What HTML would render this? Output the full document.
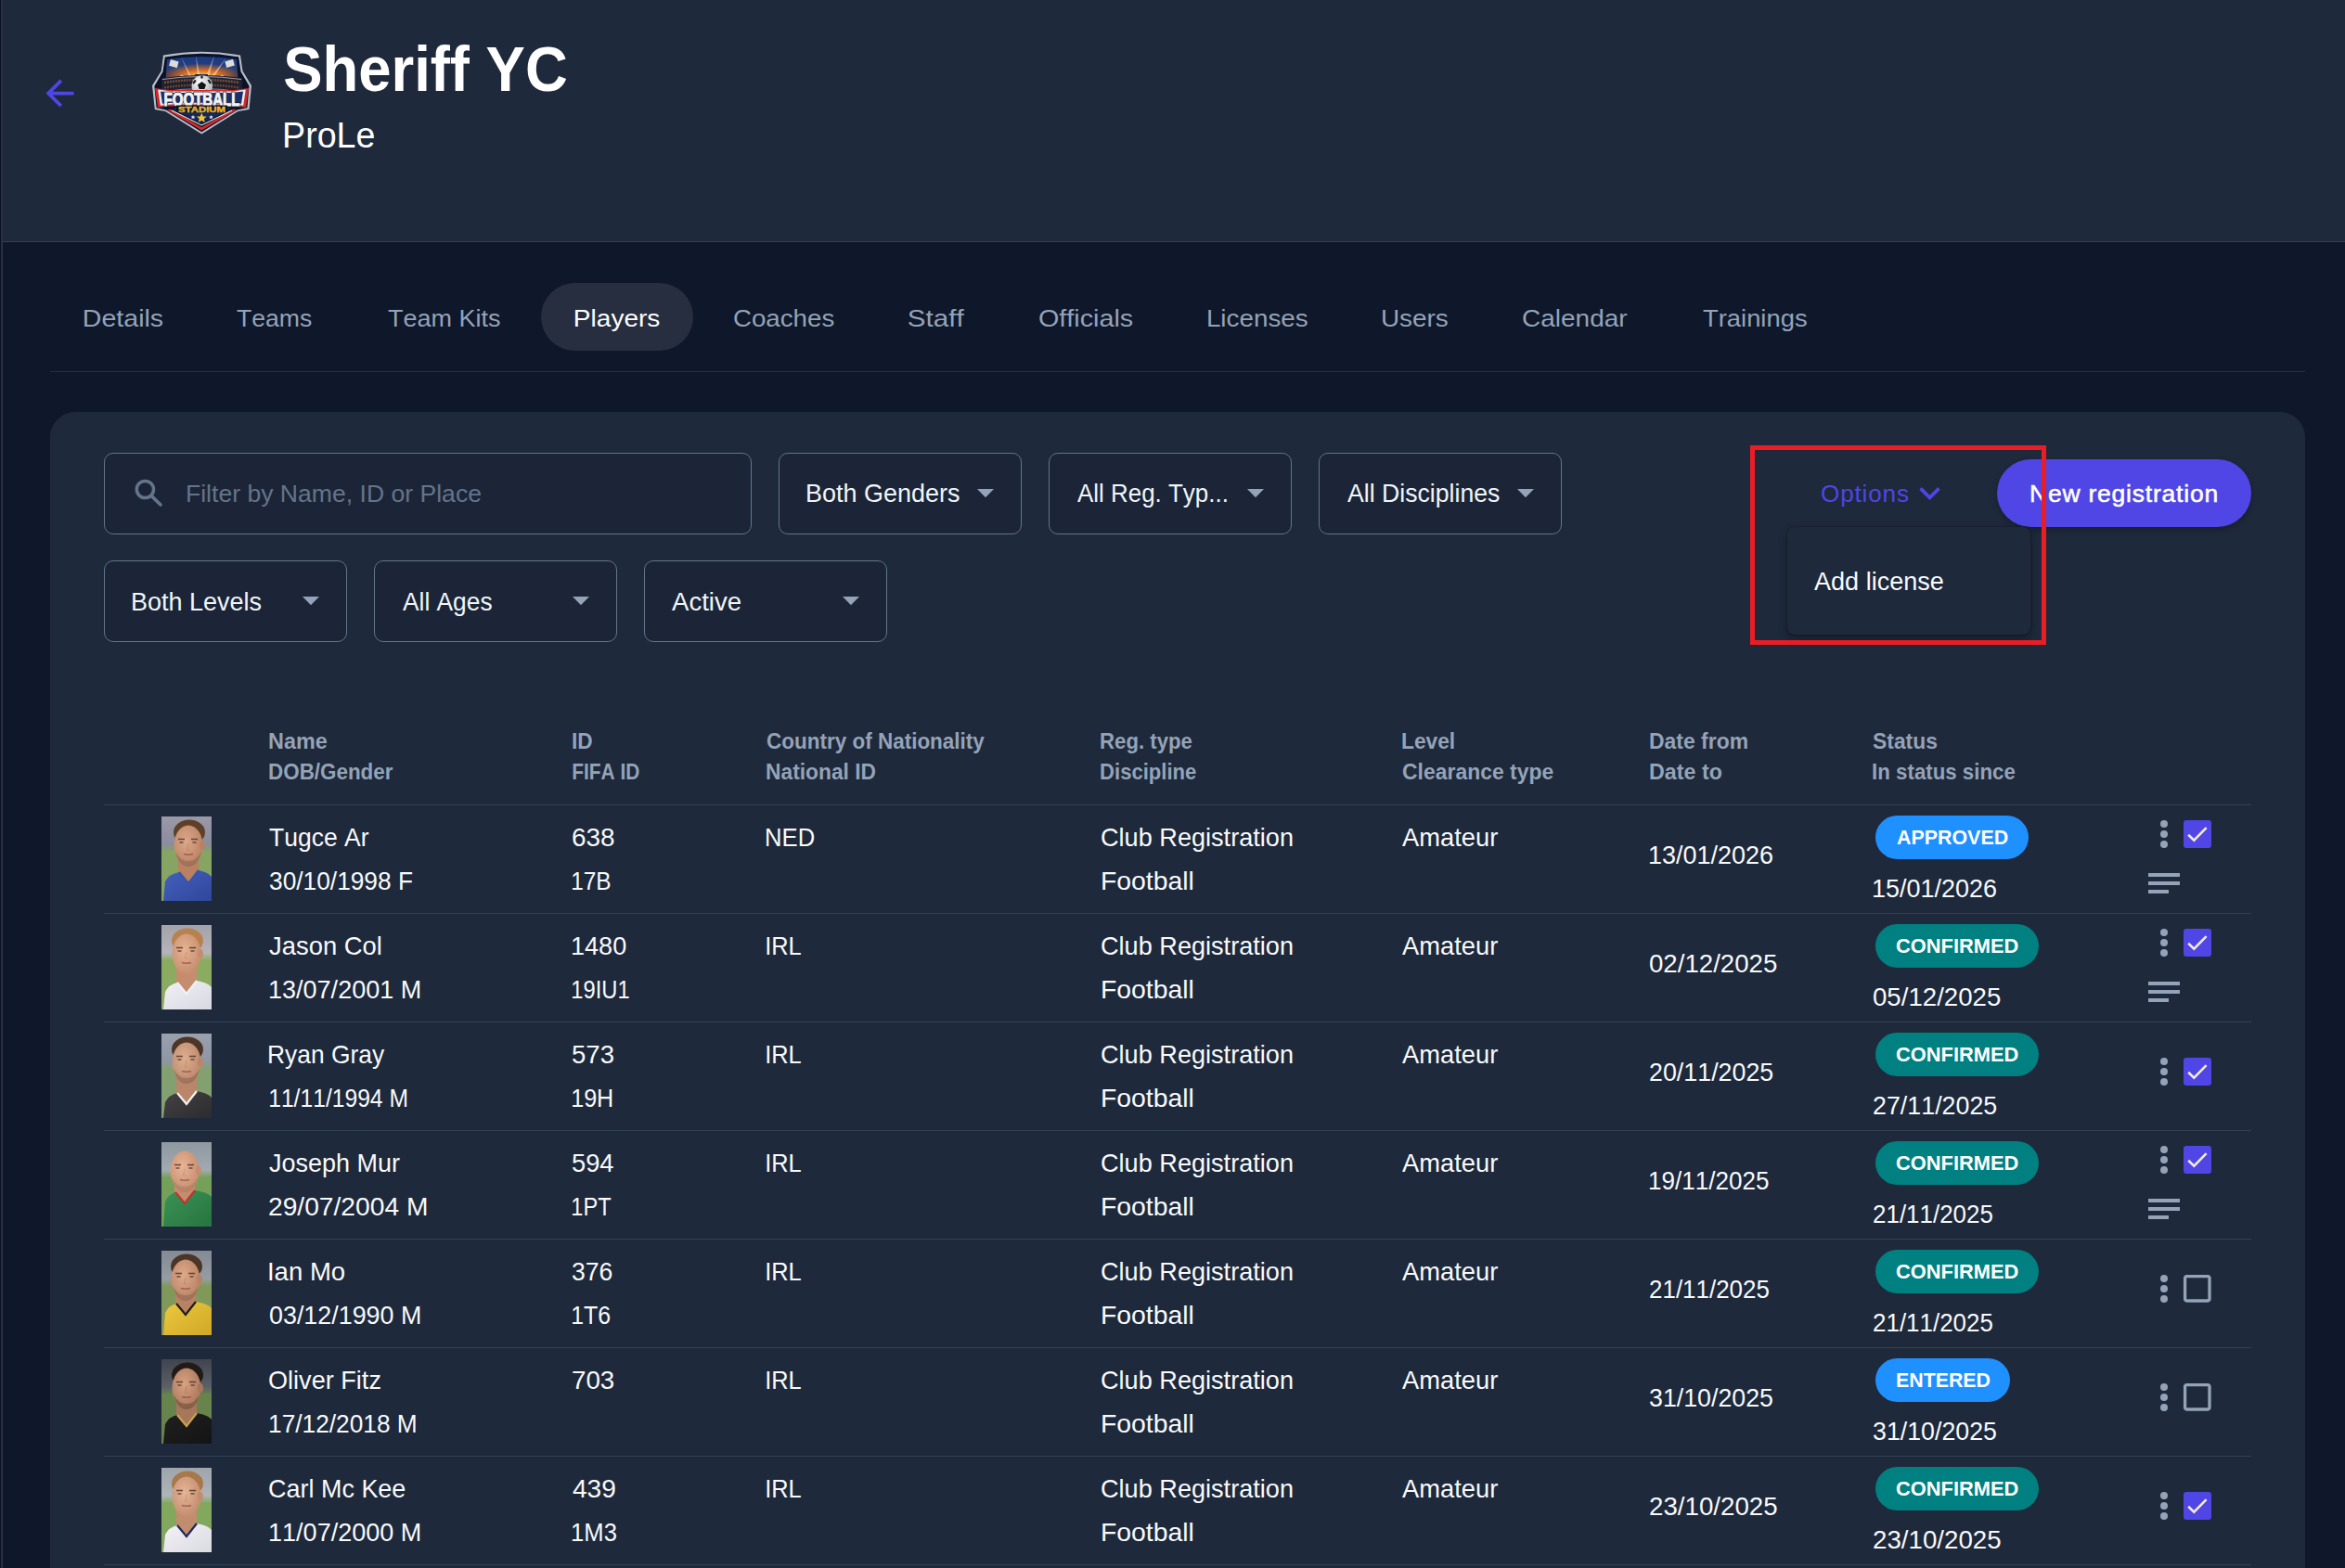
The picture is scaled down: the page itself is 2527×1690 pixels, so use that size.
<!DOCTYPE html>
<html><head><meta charset="utf-8"><title>Sheriff YC - Players</title>
<style>
html,body{margin:0;padding:0;}
body{width:2527px;height:1690px;overflow:hidden;background:#0f172a;position:relative;font-family:"Liberation Sans",sans-serif;}
.t{position:absolute;line-height:1;white-space:nowrap;font-kerning:none;}
</style></head><body>
<div style="position:absolute;left:0.00px;top:0.00px;width:1.00px;height:1690.00px;background:#0a1326"></div>
<div style="position:absolute;left:1.00px;top:0.00px;width:2.00px;height:1690.00px;background:#2a2f40"></div>
<div style="position:absolute;left:3.00px;top:0.00px;width:2524.00px;height:260.00px;background:#1e293b"></div>
<div style="position:absolute;left:3.00px;top:260.00px;width:2524.00px;height:1.00px;background:#334155"></div>
<svg style="position:absolute;left:42.1px;top:77.9px" width="45" height="45" viewBox="0 0 24 24"><path d="M20 11H7.83l5.59-5.59L12 4l-8 8 8 8 1.41-1.41L7.83 13H20v-2z" fill="#4f46e5"/></svg>
<svg style="position:absolute;left:164px;top:54px" width="107" height="91" viewBox="0 0 107 91">
<defs>
<linearGradient id="sky" x1="0" y1="0" x2="0" y2="1"><stop offset="0" stop-color="#183a86"/><stop offset="0.55" stop-color="#2a3f78"/><stop offset="1" stop-color="#3a2a30"/></linearGradient>
<radialGradient id="glow" cx="0.5" cy="0.85" r="0.55"><stop offset="0" stop-color="#ffd36a"/><stop offset="0.45" stop-color="#e0701e"/><stop offset="1" stop-color="#e0701e" stop-opacity="0"/></radialGradient>
<linearGradient id="gold" x1="0" y1="0" x2="0" y2="1"><stop offset="0" stop-color="#ffe680"/><stop offset="1" stop-color="#d89412"/></linearGradient>
<radialGradient id="ball" cx="0.4" cy="0.35" r="0.7"><stop offset="0" stop-color="#fff"/><stop offset="1" stop-color="#a8adb5"/></radialGradient>
</defs>
<path d="M12 5.6 Q53 -2 95 5.6 L97.5 22.5 L107 38.3 L104.5 63.9 L92.6 66 L53.3 90.5 L14 66 L2.8 63.9 L0 38.3 L9.8 22.5 Z" fill="#b9bfca"/>
<path d="M13.8 7.4 Q53 0.3 93.2 7.4 L95.5 23.3 L104.6 38.8 L102.4 62.2 L91.8 64.4 L53.3 88.3 L15 64.4 L4.6 62.2 L2.4 38.8 L11.5 23.3 Z" fill="#0b1228"/>
<path d="M16 10 Q53 3.8 91 10 L92.5 32 L14.5 32 Z" fill="url(#sky)"/>
<path d="M16 10 Q53 3.8 91 10 L92.5 32 L14.5 32 Z" fill="url(#glow)"/>
<path d="M31 7 L42 28 L40 28.5 Z M47 5.5 L51.5 28 L49 28 Z M67 6 L58 28 L61 28.5 Z M80 8 L64 28 L67 28.5 Z" fill="#fff6d8" opacity="0.5"/>
<rect x="19" y="11" width="9" height="7" fill="#dcdcdc" transform="rotate(15 23 14)"/>
<rect x="79" y="11" width="9" height="7" fill="#dcdcdc" transform="rotate(-15 83 14)"/>
<circle cx="32" cy="29" r="2.2" fill="#fff3c0"/><circle cx="41" cy="30" r="2" fill="#fff3c0"/><circle cx="65" cy="30" r="2" fill="#fff3c0"/><circle cx="75" cy="29" r="2.2" fill="#fff3c0"/>
<rect x="46" y="26" width="14" height="5" fill="#2a3048"/>
<path d="M10 30 Q53 24 97 30 L97 47 Q53 40 10 47 Z" fill="#1f2130"/>
<path d="M13 35 Q53 29 94 35" stroke="#7a4e34" stroke-width="2.4" fill="none" stroke-dasharray="2 1"/>
<path d="M13 40.5 Q53 34.5 94 40.5" stroke="#6e4630" stroke-width="2.2" fill="none" stroke-dasharray="2 1"/>
<path d="M11 31.5 Q53 25.5 96 31.5" stroke="#9aa2b2" stroke-width="1" fill="none"/>
<path d="M11 45 Q53 38 96 45" stroke="#9aa2b2" stroke-width="0.8" fill="none"/>
<ellipse cx="53.5" cy="48" rx="27" ry="5.5" fill="#3f8f34"/>
<ellipse cx="53.5" cy="50" rx="18" ry="3.2" fill="none" stroke="#e03030" stroke-width="1.3"/>
<path d="M56 53 Q70 52 72 48" stroke="#39a0ff" stroke-width="1.6" fill="none"/>
<circle cx="53.8" cy="38.5" r="11.3" fill="url(#ball)"/>
<path d="M53.5 34 L58 37.2 L56.4 42 L50.6 42 L49 37.2 Z" fill="#141414"/>
<path d="M44 36 L46.8 32.5 M63 36 L60.4 32 M46 46 L49.5 43.5 M61.5 46 L57.8 43.5 M53.5 27.5 L53.5 30.5" stroke="#1a1a1a" stroke-width="2.2"/>
<path d="M3 41 L19 43 L88 43 L104 41 L101 62 L88 60.5 L19 60.5 L6 62 Z" fill="#d42828"/>
<path d="M6.2 42.6 L20 44.4 L87 44.4 L100.8 42.6 L98.2 59.8 L87 58.6 L20 58.6 L8.8 59.8 Z" fill="#ececf0"/>
<path d="M9 44.4 L21 45.9 L86 45.9 L98 44.4 L96 57.8 L86 56.8 L21 56.8 L11 57.8 Z" fill="#18306e"/>
<text x="53.5" y="60.2" text-anchor="middle" font-family="Liberation Sans" font-weight="700" font-size="21" fill="#1a1a24" stroke="#1a1a24" stroke-width="2.6" textLength="82" lengthAdjust="spacingAndGlyphs">FOOTBALL</text>
<text x="53.5" y="60.2" text-anchor="middle" font-family="Liberation Sans" font-weight="700" font-size="21" fill="#f2f2f5" stroke="#f2f2f5" stroke-width="1.1" textLength="82" lengthAdjust="spacingAndGlyphs">FOOTBALL</text>
<path d="M16 64.5 L53.3 86.5 L91 64.5 L87.5 63.5 L53.3 83.3 L19.5 63.5 Z" fill="#d42828"/>
<path d="M21 65 L53.3 81 L86 65" stroke="#e8edf2" stroke-width="1.1" fill="none"/>
<path d="M23.5 64.5 L53.3 79 L83.5 64.5 L83.5 62 L23.5 62 Z" fill="#14285a"/>
<rect x="26" y="59.5" width="55" height="7.5" fill="#0b1228"/>
<text x="53.5" y="66.8" text-anchor="middle" font-family="Liberation Sans" font-weight="700" font-size="9.6" fill="url(#gold)" stroke="#e8b020" stroke-width="0.5" textLength="51" lengthAdjust="spacingAndGlyphs">STADIUM</text>
<path d="M53.3 67.8 L54.9 71.4 L58.8 71.6 L55.8 74 L56.8 77.8 L53.3 75.7 L49.8 77.8 L50.8 74 L47.8 71.6 L51.7 71.4 Z" fill="#f5c430"/>
<path d="M44 70 L44.8 71.5 L46.4 71.6 L45.2 72.6 L45.6 74.2 L44 73.3 L42.4 74.2 L42.8 72.6 L41.6 71.6 L43.2 71.5 Z" fill="#e8e8e8"/>
<path d="M63.5 70 L64.3 71.5 L65.9 71.6 L64.7 72.6 L65.1 74.2 L63.5 73.3 L61.9 74.2 L62.3 72.6 L61.1 71.6 L62.7 71.5 Z" fill="#e8e8e8"/>
</svg>

<div class="t" style="left:305.41px;top:39.88px;font-size:69.04px;color:#fff;font-weight:700;transform:scaleX(0.9186);transform-origin:1.99px 0;">Sheriff YC</div>
<div class="t" style="left:304.25px;top:126.81px;font-size:38.37px;color:#fff;transform:scaleX(0.9801);transform-origin:3.15px 0;">ProLe</div>
<div style="position:absolute;left:583.00px;top:305.00px;width:164.00px;height:73.00px;background:rgba(255,255,255,0.1);border-radius:37px"></div>
<div class="t" style="left:88.83px;top:329.57px;font-size:26.45px;color:#94a3b8;transform:scaleX(1.0806);transform-origin:2.17px 0;">Details</div>
<div class="t" style="left:255.41px;top:329.57px;font-size:26.45px;color:#94a3b8;transform:scaleX(1.0064);transform-origin:0.59px 0;">Teams</div>
<div class="t" style="left:417.61px;top:329.57px;font-size:26.45px;color:#94a3b8;transform:scaleX(1.0211);transform-origin:0.59px 0;">Team Kits</div>
<div class="t" style="left:617.53px;top:329.57px;font-size:26.45px;color:#fff;transform:scaleX(1.0601);transform-origin:2.17px 0;">Players</div>
<div class="t" style="left:789.66px;top:329.57px;font-size:26.45px;color:#94a3b8;transform:scaleX(1.0479);transform-origin:1.34px 0;">Coaches</div>
<div class="t" style="left:978.20px;top:329.57px;font-size:26.45px;color:#94a3b8;transform:scaleX(1.1194);transform-origin:1.20px 0;">Staff</div>
<div class="t" style="left:1119.05px;top:329.57px;font-size:26.45px;color:#94a3b8;transform:scaleX(1.0886);transform-origin:1.25px 0;">Officials</div>
<div class="t" style="left:1299.63px;top:329.57px;font-size:26.45px;color:#94a3b8;transform:scaleX(1.0525);transform-origin:2.17px 0;">Licenses</div>
<div class="t" style="left:1487.86px;top:329.57px;font-size:26.45px;color:#94a3b8;transform:scaleX(1.0563);transform-origin:2.04px 0;">Users</div>
<div class="t" style="left:1639.86px;top:329.57px;font-size:26.45px;color:#94a3b8;transform:scaleX(1.0600);transform-origin:1.34px 0;">Calendar</div>
<div class="t" style="left:1834.61px;top:329.57px;font-size:26.45px;color:#94a3b8;transform:scaleX(1.0359);transform-origin:0.59px 0;">Trainings</div>
<div style="position:absolute;left:54.00px;top:400.00px;width:2430.00px;height:1.00px;background:#253041"></div>
<div style="position:absolute;left:54.00px;top:444.00px;width:2430.00px;height:1400.00px;background:#1e293b;border-radius:27px"></div>

<div style="position:absolute;left:112.00px;top:488.00px;width:698.00px;height:87.50px;box-sizing:border-box;border:1.4px solid #64748b;border-radius:10px;background:#1b2537"></div>
<svg style="position:absolute;left:140px;top:512px" width="40" height="40" viewBox="0 0 40 40">
<circle cx="16.4" cy="15.5" r="9.1" fill="none" stroke="#64748b" stroke-width="3.5"/>
<path d="M23.3 22.6 L33 32" stroke="#64748b" stroke-width="3.6" stroke-linecap="round"/></svg>
<div class="t" style="left:199.85px;top:519.32px;font-size:26.16px;color:#64748b;transform:scaleX(1.0160);transform-origin:2.15px 0;">Filter by Name, ID or Place</div>
<div style="position:absolute;left:839.00px;top:488.00px;width:262.00px;height:87.50px;box-sizing:border-box;border:1.4px solid #64748b;border-radius:10px;background:#1b2537"></div>
<div class="t" style="left:868.01px;top:519.13px;font-size:26.74px;color:#f1f5f9;transform:scaleX(1.0089);transform-origin:2.19px 0;">Both Genders</div>
<svg style="position:absolute;left:1053.00px;top:526.50px" width="18" height="9.5" viewBox="0 0 18 9.5"><path d="M0 0 H18 L9 9.2 Z" fill="#94a3b8"/></svg>
<div style="position:absolute;left:1130.00px;top:488.00px;width:262.00px;height:87.50px;box-sizing:border-box;border:1.4px solid #64748b;border-radius:10px;background:#1b2537"></div>
<div class="t" style="left:1161.05px;top:519.13px;font-size:26.74px;color:#f1f5f9;transform:scaleX(0.9701);transform-origin:0.05px 0;">All Reg. Typ...</div>
<svg style="position:absolute;left:1344.00px;top:526.50px" width="18" height="9.5" viewBox="0 0 18 9.5"><path d="M0 0 H18 L9 9.2 Z" fill="#94a3b8"/></svg>
<div style="position:absolute;left:1421.00px;top:488.00px;width:262.00px;height:87.50px;box-sizing:border-box;border:1.4px solid #64748b;border-radius:10px;background:#1b2537"></div>
<div class="t" style="left:1451.65px;top:519.13px;font-size:26.74px;color:#f1f5f9;transform:scaleX(0.9972);transform-origin:0.05px 0;">All Disciplines</div>
<svg style="position:absolute;left:1635.00px;top:526.50px" width="18" height="9.5" viewBox="0 0 18 9.5"><path d="M0 0 H18 L9 9.2 Z" fill="#94a3b8"/></svg>
<div style="position:absolute;left:112.00px;top:604.30px;width:262.00px;height:88.00px;box-sizing:border-box;border:1.4px solid #64748b;border-radius:10px;background:#1b2537"></div>
<div class="t" style="left:141.11px;top:635.53px;font-size:26.74px;color:#f1f5f9;transform:scaleX(1.0096);transform-origin:2.19px 0;">Both Levels</div>
<svg style="position:absolute;left:326.00px;top:642.70px" width="18" height="9.5" viewBox="0 0 18 9.5"><path d="M0 0 H18 L9 9.2 Z" fill="#94a3b8"/></svg>
<div style="position:absolute;left:403.00px;top:604.30px;width:262.00px;height:88.00px;box-sizing:border-box;border:1.4px solid #64748b;border-radius:10px;background:#1b2537"></div>
<div class="t" style="left:433.55px;top:635.53px;font-size:26.74px;color:#f1f5f9;transform:scaleX(0.9846);transform-origin:0.05px 0;">All Ages</div>
<svg style="position:absolute;left:617.00px;top:642.70px" width="18" height="9.5" viewBox="0 0 18 9.5"><path d="M0 0 H18 L9 9.2 Z" fill="#94a3b8"/></svg>
<div style="position:absolute;left:694.00px;top:604.30px;width:262.00px;height:88.00px;box-sizing:border-box;border:1.4px solid #64748b;border-radius:10px;background:#1b2537"></div>
<div class="t" style="left:724.45px;top:635.53px;font-size:26.74px;color:#f1f5f9;transform:scaleX(1.0309);transform-origin:0.05px 0;">Active</div>
<svg style="position:absolute;left:908.00px;top:642.70px" width="18" height="9.5" viewBox="0 0 18 9.5"><path d="M0 0 H18 L9 9.2 Z" fill="#94a3b8"/></svg>
<div class="t" style="left:1961.96px;top:518.92px;font-size:26.16px;color:#4f46e5;transform:scaleX(1.0002);transform-origin:1.24px 0;letter-spacing:0.80px;">Options</div>
<svg style="position:absolute;left:2057px;top:508.9px" width="45" height="45" viewBox="0 0 24 24"><path d="M16.59 8.59L12 13.17 7.41 8.59 6 10l6 6 6-6z" fill="#4f46e5"/></svg>
<div style="position:absolute;left:2152.00px;top:495.00px;width:274.00px;height:73.00px;background:#4f46e5;border-radius:37px;box-shadow:0 3px 6px rgba(0,0,0,0.25)"></div>
<div class="t" style="left:2187.03px;top:519.27px;font-size:26.45px;color:#fff;-webkit-text-stroke:0.55px #fff;transform:scaleX(1.0008);transform-origin:2.17px 0;letter-spacing:0.80px;">New registration</div>
<div style="position:absolute;left:1926.00px;top:568.00px;width:262.00px;height:116.00px;background:#1e293b;border-radius:8px;box-shadow:0 4px 10px rgba(0,0,0,0.35), 0 0 2px rgba(0,0,0,0.3)"></div>
<div class="t" style="left:1955.45px;top:614.13px;font-size:26.74px;color:#f8fafc;transform:scaleX(1.0115);transform-origin:0.05px 0;">Add license</div>
<div style="position:absolute;left:1886.00px;top:480.00px;width:319.00px;height:215.00px;box-sizing:border-box;border:5px solid #ec1c24"></div>
<div class="t" style="left:288.91px;top:787.48px;font-size:23.84px;color:#94a3b8;font-weight:700;transform:scaleX(0.9822);transform-origin:1.59px 0;">Name</div>
<div class="t" style="left:288.91px;top:820.28px;font-size:23.84px;color:#94a3b8;font-weight:700;transform:scaleX(0.9391);transform-origin:1.59px 0;">DOB/Gender</div>
<div class="t" style="left:615.91px;top:787.48px;font-size:23.84px;color:#94a3b8;font-weight:700;transform:scaleX(0.9510);transform-origin:1.59px 0;">ID</div>
<div class="t" style="left:615.91px;top:820.28px;font-size:23.84px;color:#94a3b8;font-weight:700;transform:scaleX(0.8772);transform-origin:1.59px 0;">FIFA ID</div>
<div class="t" style="left:825.52px;top:787.48px;font-size:23.84px;color:#94a3b8;font-weight:700;transform:scaleX(0.9433);transform-origin:0.98px 0;">Country of Nationality</div>
<div class="t" style="left:824.91px;top:820.28px;font-size:23.84px;color:#94a3b8;font-weight:700;transform:scaleX(0.9557);transform-origin:1.59px 0;">National ID</div>
<div class="t" style="left:1184.91px;top:787.48px;font-size:23.84px;color:#94a3b8;font-weight:700;transform:scaleX(0.9296);transform-origin:1.59px 0;">Reg. type</div>
<div class="t" style="left:1184.91px;top:820.28px;font-size:23.84px;color:#94a3b8;font-weight:700;transform:scaleX(0.9257);transform-origin:1.59px 0;">Discipline</div>
<div class="t" style="left:1510.11px;top:787.48px;font-size:23.84px;color:#94a3b8;font-weight:700;transform:scaleX(0.9537);transform-origin:1.59px 0;">Level</div>
<div class="t" style="left:1510.72px;top:820.28px;font-size:23.84px;color:#94a3b8;font-weight:700;transform:scaleX(0.9624);transform-origin:0.98px 0;">Clearance type</div>
<div class="t" style="left:1776.61px;top:787.48px;font-size:23.84px;color:#94a3b8;font-weight:700;transform:scaleX(0.9622);transform-origin:1.59px 0;">Date from</div>
<div class="t" style="left:1776.61px;top:820.28px;font-size:23.84px;color:#94a3b8;font-weight:700;transform:scaleX(0.9762);transform-origin:1.59px 0;">Date to</div>
<div class="t" style="left:2017.81px;top:787.48px;font-size:23.84px;color:#94a3b8;font-weight:700;transform:scaleX(0.9595);transform-origin:0.69px 0;">Status</div>
<div class="t" style="left:2016.91px;top:820.28px;font-size:23.84px;color:#94a3b8;font-weight:700;transform:scaleX(0.9345);transform-origin:1.59px 0;">In status since</div>
<div style="position:absolute;left:112.00px;top:867.00px;width:2314.00px;height:1.00px;background:#334155"></div>
<div style="position:absolute;left:112.00px;top:984.00px;width:2314.00px;height:1.00px;background:#334155"></div>
<svg style="position:absolute;left:174.00px;top:880.00px" width="54" height="91" viewBox="0 0 54 91" preserveAspectRatio="none">
<defs><linearGradient id="ph0b" x1="0" y1="0" x2="0" y2="1"><stop offset="0" stop-color="#9c98a8"/><stop offset="0.33" stop-color="#8a8d9c"/><stop offset="0.42" stop-color="#86a462"/><stop offset="1" stop-color="#86a462"/></linearGradient>
<radialGradient id="ph0f" cx="0.42" cy="0.4" r="0.65"><stop offset="0" stop-color="#dca88a"/><stop offset="1" stop-color="#b98062"/></radialGradient>
<linearGradient id="ph0s" x1="0" y1="0" x2="1" y2="1"><stop offset="0" stop-color="#4561bf"/><stop offset="1" stop-color="#2f479a"/></linearGradient></defs>
<rect width="54" height="91" fill="url(#ph0b)"/>
<rect x="18.0" y="42" width="22" height="32.0" fill="#b98062"/>
<path d="M2 91 L4 70.0 Q8 62.0 19.0 60.0 L29.0 72.0 L40.0 58.0 Q50 60.0 54 65.0 L54 91 Z" fill="url(#ph0s)"/>
<path d="M19.0 60.0 L29.0 72.0 L40.0 58.0" fill="none" stroke="#3a55ad" stroke-width="2.2"/>
<ellipse cx="30.0" cy="17" rx="17" ry="13.5" fill="#5e4029"/>
<ellipse cx="29.0" cy="31" rx="15.5" ry="21.5" fill="url(#ph0f)"/>
<ellipse cx="44.0" cy="31" rx="3" ry="5" fill="#b98062"/>
<path d="M15.0 38 Q19.0 54 29.0 54 Q39.0 54 43.0 38 Q38.0 48 29.0 48 Q20.0 48 15.0 38 Z" fill="#8a6450" opacity="0.55"/>
<path d="M18.0 24.5 h7 M32.0 24.5 h7" stroke="#4a3020" stroke-width="1.6" opacity="0.8"/>
<path d="M19.5 28 h4 M33.5 28 h4" stroke="#3a2a22" stroke-width="1.5" opacity="0.7"/>
<path d="M24.0 40.5 q5 1.5 10 0" stroke="#8a4a40" stroke-width="1.6" fill="none" opacity="0.7"/>
<path d="M29.0 29 l-1.5 7 h3" stroke="#b98062" stroke-width="1.2" fill="none" opacity="0.6"/>
</svg>
<div class="t" style="left:290.09px;top:890.48px;font-size:27.03px;color:#f8fafc;transform:scaleX(0.9804);transform-origin:0.61px 0;">Tugce Ar</div>
<div class="t" style="left:289.67px;top:937.38px;font-size:27.03px;color:#f8fafc;transform:scaleX(0.9732);transform-origin:1.03px 0;">30/10/1998 F</div>
<div class="t" style="left:616.03px;top:890.48px;font-size:27.03px;color:#f8fafc;transform:scaleX(1.0339);transform-origin:1.37px 0;">638</div>
<div class="t" style="left:615.34px;top:937.38px;font-size:27.03px;color:#f8fafc;transform:scaleX(0.9032);transform-origin:2.06px 0;">17B</div>
<div class="t" style="left:824.08px;top:890.48px;font-size:27.03px;color:#f8fafc;transform:scaleX(0.9483);transform-origin:2.22px 0;">NED</div>
<div class="t" style="left:1186.13px;top:890.48px;font-size:27.03px;color:#f8fafc;transform:scaleX(1.0037);transform-origin:1.37px 0;">Club Registration</div>
<div class="t" style="left:1185.68px;top:937.38px;font-size:27.03px;color:#f8fafc;transform:scaleX(1.0504);transform-origin:2.22px 0;">Football</div>
<div class="t" style="left:1511.15px;top:890.48px;font-size:27.03px;color:#f8fafc;transform:scaleX(1.0111);transform-origin:0.05px 0;">Amateur</div>
<div class="t" style="left:1776.14px;top:909.48px;font-size:27.03px;color:#f8fafc;transform:scaleX(0.9986);transform-origin:2.06px 0;">13/01/2026</div>
<div style="position:absolute;left:2021.00px;top:879.00px;width:165.00px;height:47.00px;background:#1e90ff;border-radius:24px"></div>
<div class="t" style="left:2043.76px;top:891.90px;font-size:21.80px;color:#fff;font-weight:700;transform:scaleX(0.9818);transform-origin:0.54px 0;">APPROVED</div>
<div class="t" style="left:2016.94px;top:945.08px;font-size:27.03px;color:#f8fafc;transform:scaleX(0.9986);transform-origin:2.06px 0;">15/01/2026</div>
<div style="position:absolute;left:2327.70px;top:884.30px;width:8.2px;height:8.2px;border-radius:50%;background:#94a3b8"></div>
<div style="position:absolute;left:2327.70px;top:895.30px;width:8.2px;height:8.2px;border-radius:50%;background:#94a3b8"></div>
<div style="position:absolute;left:2327.70px;top:906.30px;width:8.2px;height:8.2px;border-radius:50%;background:#94a3b8"></div>
<svg style="position:absolute;left:2352.8px;top:884.00px" width="30" height="30" viewBox="0 0 30 30"><rect x="0" y="0" width="30" height="30" rx="3" fill="#4f46e5"/><path d="M5.2 15.8 L11.3 21.6 L24.6 8.2" fill="none" stroke="#f3eadf" stroke-width="2.6"/></svg>
<div style="position:absolute;left:2315.00px;top:941.40px;width:33.60px;height:3.30px;background:#94a3b8"></div>
<div style="position:absolute;left:2315.00px;top:950.40px;width:33.60px;height:3.30px;background:#94a3b8"></div>
<div style="position:absolute;left:2315.00px;top:959.40px;width:22.00px;height:3.30px;background:#94a3b8"></div>
<div style="position:absolute;left:112.00px;top:1101.00px;width:2314.00px;height:1.00px;background:#334155"></div>
<svg style="position:absolute;left:174.00px;top:996.95px" width="54" height="91" viewBox="0 0 54 91" preserveAspectRatio="none">
<defs><linearGradient id="ph1b" x1="0" y1="0" x2="0" y2="1"><stop offset="0" stop-color="#a4a2aa"/><stop offset="0.33" stop-color="#b6b4ba"/><stop offset="0.42" stop-color="#8bab60"/><stop offset="1" stop-color="#8bab60"/></linearGradient>
<radialGradient id="ph1f" cx="0.42" cy="0.4" r="0.65"><stop offset="0" stop-color="#e6b292"/><stop offset="1" stop-color="#c58d6e"/></radialGradient>
<linearGradient id="ph1s" x1="0" y1="0" x2="1" y2="1"><stop offset="0" stop-color="#f0f0f5"/><stop offset="1" stop-color="#d8d8e2"/></linearGradient></defs>
<rect width="54" height="91" fill="url(#ph1b)"/>
<rect x="16.0" y="42" width="22" height="34.0" fill="#c58d6e"/>
<path d="M2 91 L4 72.0 Q8 64.0 17.0 62.0 L27.0 74.0 L38.0 60.0 Q50 62.0 54 67.0 L54 91 Z" fill="url(#ph1s)"/>
<path d="M17.0 62.0 L27.0 74.0 L38.0 60.0" fill="none" stroke="#f0f0f5" stroke-width="2.2"/>
<ellipse cx="28.0" cy="17" rx="17" ry="13.5" fill="#b8824e"/>
<ellipse cx="27.0" cy="31" rx="15.5" ry="21.5" fill="url(#ph1f)"/>
<ellipse cx="42.0" cy="31" rx="3" ry="5" fill="#c58d6e"/>

<path d="M16.0 24.5 h7 M30.0 24.5 h7" stroke="#4a3020" stroke-width="1.6" opacity="0.8"/>
<path d="M17.5 28 h4 M31.5 28 h4" stroke="#3a2a22" stroke-width="1.5" opacity="0.7"/>
<path d="M22.0 40.5 q5 1.5 10 0" stroke="#8a4a40" stroke-width="1.6" fill="none" opacity="0.7"/>
<path d="M27.0 29 l-1.5 7 h3" stroke="#c58d6e" stroke-width="1.2" fill="none" opacity="0.6"/>
</svg>
<div class="t" style="left:290.28px;top:1007.43px;font-size:27.03px;color:#f8fafc;transform:scaleX(1.0145);transform-origin:0.42px 0;">Jason Col</div>
<div class="t" style="left:288.64px;top:1054.33px;font-size:27.03px;color:#f8fafc;transform:scaleX(1.0002);transform-origin:2.06px 0;">13/07/2001 M</div>
<div class="t" style="left:615.34px;top:1007.43px;font-size:27.03px;color:#f8fafc;transform:scaleX(1.0013);transform-origin:2.06px 0;">1480</div>
<div class="t" style="left:615.34px;top:1054.33px;font-size:27.03px;color:#f8fafc;transform:scaleX(0.8784);transform-origin:2.06px 0;">19IU1</div>
<div class="t" style="left:823.81px;top:1007.43px;font-size:27.03px;color:#f8fafc;transform:scaleX(0.9411);transform-origin:2.49px 0;">IRL</div>
<div class="t" style="left:1186.13px;top:1007.43px;font-size:27.03px;color:#f8fafc;transform:scaleX(1.0037);transform-origin:1.37px 0;">Club Registration</div>
<div class="t" style="left:1185.68px;top:1054.33px;font-size:27.03px;color:#f8fafc;transform:scaleX(1.0504);transform-origin:2.22px 0;">Football</div>
<div class="t" style="left:1511.15px;top:1007.43px;font-size:27.03px;color:#f8fafc;transform:scaleX(1.0111);transform-origin:0.05px 0;">Amateur</div>
<div class="t" style="left:1777.14px;top:1026.43px;font-size:27.03px;color:#f8fafc;transform:scaleX(1.0235);transform-origin:1.06px 0;">02/12/2025</div>
<div style="position:absolute;left:2021.00px;top:995.95px;width:176.00px;height:47.00px;background:#008080;border-radius:24px"></div>
<div class="t" style="left:2043.41px;top:1008.85px;font-size:21.80px;color:#fff;font-weight:700;transform:scaleX(1.0030);transform-origin:0.89px 0;">CONFIRMED</div>
<div class="t" style="left:2017.94px;top:1062.03px;font-size:27.03px;color:#f8fafc;transform:scaleX(1.0235);transform-origin:1.06px 0;">05/12/2025</div>
<div style="position:absolute;left:2327.70px;top:1001.25px;width:8.2px;height:8.2px;border-radius:50%;background:#94a3b8"></div>
<div style="position:absolute;left:2327.70px;top:1012.25px;width:8.2px;height:8.2px;border-radius:50%;background:#94a3b8"></div>
<div style="position:absolute;left:2327.70px;top:1023.25px;width:8.2px;height:8.2px;border-radius:50%;background:#94a3b8"></div>
<svg style="position:absolute;left:2352.8px;top:1000.95px" width="30" height="30" viewBox="0 0 30 30"><rect x="0" y="0" width="30" height="30" rx="3" fill="#4f46e5"/><path d="M5.2 15.8 L11.3 21.6 L24.6 8.2" fill="none" stroke="#f3eadf" stroke-width="2.6"/></svg>
<div style="position:absolute;left:2315.00px;top:1058.35px;width:33.60px;height:3.30px;background:#94a3b8"></div>
<div style="position:absolute;left:2315.00px;top:1067.35px;width:33.60px;height:3.30px;background:#94a3b8"></div>
<div style="position:absolute;left:2315.00px;top:1076.35px;width:22.00px;height:3.30px;background:#94a3b8"></div>
<div style="position:absolute;left:112.00px;top:1218.00px;width:2314.00px;height:1.00px;background:#334155"></div>
<svg style="position:absolute;left:174.00px;top:1113.90px" width="54" height="91" viewBox="0 0 54 91" preserveAspectRatio="none">
<defs><linearGradient id="ph2b" x1="0" y1="0" x2="0" y2="1"><stop offset="0" stop-color="#9aa0ac"/><stop offset="0.33" stop-color="#8e96a4"/><stop offset="0.42" stop-color="#83a070"/><stop offset="1" stop-color="#83a070"/></linearGradient>
<radialGradient id="ph2f" cx="0.42" cy="0.4" r="0.65"><stop offset="0" stop-color="#dfae90"/><stop offset="1" stop-color="#b9866a"/></radialGradient>
<linearGradient id="ph2s" x1="0" y1="0" x2="1" y2="1"><stop offset="0" stop-color="#444244"/><stop offset="1" stop-color="#2c2b2d"/></linearGradient></defs>
<rect width="54" height="91" fill="url(#ph2b)"/>
<rect x="16.0" y="42" width="22" height="36.0" fill="#b9866a"/>
<path d="M2 91 L4 74.0 Q8 66.0 17.0 64.0 L27.0 76.0 L38.0 62.0 Q50 64.0 54 69.0 L54 91 Z" fill="url(#ph2s)"/>
<path d="M17.0 64.0 L27.0 76.0 L38.0 62.0" fill="none" stroke="#f2f2f2" stroke-width="2.2"/>
<ellipse cx="28.0" cy="17" rx="17" ry="13.5" fill="#4d3628"/>
<ellipse cx="27.0" cy="31" rx="15.5" ry="21.5" fill="url(#ph2f)"/>
<ellipse cx="42.0" cy="31" rx="3" ry="5" fill="#b9866a"/>
<path d="M13.0 38 Q17.0 54 27.0 54 Q37.0 54 41.0 38 Q36.0 48 27.0 48 Q18.0 48 13.0 38 Z" fill="#86624e" opacity="0.55"/>
<path d="M16.0 24.5 h7 M30.0 24.5 h7" stroke="#4a3020" stroke-width="1.6" opacity="0.8"/>
<path d="M17.5 28 h4 M31.5 28 h4" stroke="#3a2a22" stroke-width="1.5" opacity="0.7"/>
<path d="M22.0 40.5 q5 1.5 10 0" stroke="#8a4a40" stroke-width="1.6" fill="none" opacity="0.7"/>
<path d="M27.0 29 l-1.5 7 h3" stroke="#b9866a" stroke-width="1.2" fill="none" opacity="0.6"/>
</svg>
<div class="t" style="left:288.48px;top:1124.38px;font-size:27.03px;color:#f8fafc;transform:scaleX(0.9769);transform-origin:2.22px 0;">Ryan Gray</div>
<div class="t" style="left:288.64px;top:1171.28px;font-size:27.03px;color:#f8fafc;transform:scaleX(0.9127);transform-origin:2.06px 0;">11/11/1994 M</div>
<div class="t" style="left:616.32px;top:1124.38px;font-size:27.03px;color:#f8fafc;transform:scaleX(1.0202);transform-origin:1.08px 0;">573</div>
<div class="t" style="left:615.34px;top:1171.28px;font-size:27.03px;color:#f8fafc;transform:scaleX(0.9309);transform-origin:2.06px 0;">19H</div>
<div class="t" style="left:823.81px;top:1124.38px;font-size:27.03px;color:#f8fafc;transform:scaleX(0.9411);transform-origin:2.49px 0;">IRL</div>
<div class="t" style="left:1186.13px;top:1124.38px;font-size:27.03px;color:#f8fafc;transform:scaleX(1.0037);transform-origin:1.37px 0;">Club Registration</div>
<div class="t" style="left:1185.68px;top:1171.28px;font-size:27.03px;color:#f8fafc;transform:scaleX(1.0504);transform-origin:2.22px 0;">Football</div>
<div class="t" style="left:1511.15px;top:1124.38px;font-size:27.03px;color:#f8fafc;transform:scaleX(1.0111);transform-origin:0.05px 0;">Amateur</div>
<div class="t" style="left:1776.84px;top:1143.38px;font-size:27.03px;color:#f8fafc;transform:scaleX(0.9930);transform-origin:1.36px 0;">20/11/2025</div>
<div style="position:absolute;left:2021.00px;top:1112.90px;width:176.00px;height:47.00px;background:#008080;border-radius:24px"></div>
<div class="t" style="left:2043.41px;top:1125.80px;font-size:21.80px;color:#fff;font-weight:700;transform:scaleX(1.0030);transform-origin:0.89px 0;">CONFIRMED</div>
<div class="t" style="left:2017.64px;top:1178.98px;font-size:27.03px;color:#f8fafc;transform:scaleX(0.9930);transform-origin:1.36px 0;">27/11/2025</div>
<div style="position:absolute;left:2327.70px;top:1140.00px;width:8.2px;height:8.2px;border-radius:50%;background:#94a3b8"></div>
<div style="position:absolute;left:2327.70px;top:1151.00px;width:8.2px;height:8.2px;border-radius:50%;background:#94a3b8"></div>
<div style="position:absolute;left:2327.70px;top:1162.00px;width:8.2px;height:8.2px;border-radius:50%;background:#94a3b8"></div>
<svg style="position:absolute;left:2352.8px;top:1140.20px" width="30" height="30" viewBox="0 0 30 30"><rect x="0" y="0" width="30" height="30" rx="3" fill="#4f46e5"/><path d="M5.2 15.8 L11.3 21.6 L24.6 8.2" fill="none" stroke="#f3eadf" stroke-width="2.6"/></svg>
<div style="position:absolute;left:112.00px;top:1335.00px;width:2314.00px;height:1.00px;background:#334155"></div>
<svg style="position:absolute;left:174.00px;top:1230.85px" width="54" height="91" viewBox="0 0 54 91" preserveAspectRatio="none">
<defs><linearGradient id="ph3b" x1="0" y1="0" x2="0" y2="1"><stop offset="0" stop-color="#8e98a0"/><stop offset="0.33" stop-color="#a2aab0"/><stop offset="0.42" stop-color="#74a05a"/><stop offset="1" stop-color="#74a05a"/></linearGradient>
<radialGradient id="ph3f" cx="0.42" cy="0.4" r="0.65"><stop offset="0" stop-color="#e8b496"/><stop offset="1" stop-color="#c68c6e"/></radialGradient>
<linearGradient id="ph3s" x1="0" y1="0" x2="1" y2="1"><stop offset="0" stop-color="#3a9456"/><stop offset="1" stop-color="#27743f"/></linearGradient></defs>
<rect width="54" height="91" fill="url(#ph3b)"/>
<rect x="14.0" y="42" width="22" height="26.0" fill="#c68c6e"/>
<path d="M2 91 L4 64.0 Q8 56.0 15.0 54.0 L25.0 66.0 L36.0 52.0 Q50 54.0 54 59.0 L54 91 Z" fill="url(#ph3s)"/>
<path d="M15.0 54.0 L25.0 66.0 L36.0 52.0" fill="none" stroke="#c03530" stroke-width="2.2"/>

<ellipse cx="25.0" cy="31" rx="15.5" ry="21.5" fill="url(#ph3f)"/>
<ellipse cx="40.0" cy="31" rx="3" ry="5" fill="#c68c6e"/>
<path d="M11.0 38 Q15.0 54 25.0 54 Q35.0 54 39.0 38 Q34.0 48 25.0 48 Q16.0 48 11.0 38 Z" fill="#a87a60" opacity="0.55"/>
<path d="M14.0 24.5 h7 M28.0 24.5 h7" stroke="#4a3020" stroke-width="1.6" opacity="0.8"/>
<path d="M15.5 28 h4 M29.5 28 h4" stroke="#3a2a22" stroke-width="1.5" opacity="0.7"/>
<path d="M20.0 40.5 q5 1.5 10 0" stroke="#8a4a40" stroke-width="1.6" fill="none" opacity="0.7"/>
<path d="M25.0 29 l-1.5 7 h3" stroke="#c68c6e" stroke-width="1.2" fill="none" opacity="0.6"/>
</svg>
<div class="t" style="left:290.28px;top:1241.33px;font-size:27.03px;color:#f8fafc;transform:scaleX(0.9980);transform-origin:0.42px 0;">Joseph Mur</div>
<div class="t" style="left:289.34px;top:1288.23px;font-size:27.03px;color:#f8fafc;transform:scaleX(1.0441);transform-origin:1.36px 0;">29/07/2004 M</div>
<div class="t" style="left:616.32px;top:1241.33px;font-size:27.03px;color:#f8fafc;transform:scaleX(1.0108);transform-origin:1.08px 0;">594</div>
<div class="t" style="left:615.34px;top:1288.23px;font-size:27.03px;color:#f8fafc;transform:scaleX(0.8742);transform-origin:2.06px 0;">1PT</div>
<div class="t" style="left:823.81px;top:1241.33px;font-size:27.03px;color:#f8fafc;transform:scaleX(0.9411);transform-origin:2.49px 0;">IRL</div>
<div class="t" style="left:1186.13px;top:1241.33px;font-size:27.03px;color:#f8fafc;transform:scaleX(1.0037);transform-origin:1.37px 0;">Club Registration</div>
<div class="t" style="left:1185.68px;top:1288.23px;font-size:27.03px;color:#f8fafc;transform:scaleX(1.0504);transform-origin:2.22px 0;">Football</div>
<div class="t" style="left:1511.15px;top:1241.33px;font-size:27.03px;color:#f8fafc;transform:scaleX(1.0111);transform-origin:0.05px 0;">Amateur</div>
<div class="t" style="left:1776.14px;top:1260.33px;font-size:27.03px;color:#f8fafc;transform:scaleX(0.9652);transform-origin:2.06px 0;">19/11/2025</div>
<div style="position:absolute;left:2021.00px;top:1229.85px;width:176.00px;height:47.00px;background:#008080;border-radius:24px"></div>
<div class="t" style="left:2043.41px;top:1242.75px;font-size:21.80px;color:#fff;font-weight:700;transform:scaleX(1.0030);transform-origin:0.89px 0;">CONFIRMED</div>
<div class="t" style="left:2017.64px;top:1295.93px;font-size:27.03px;color:#f8fafc;transform:scaleX(0.9602);transform-origin:1.36px 0;">21/11/2025</div>
<div style="position:absolute;left:2327.70px;top:1235.15px;width:8.2px;height:8.2px;border-radius:50%;background:#94a3b8"></div>
<div style="position:absolute;left:2327.70px;top:1246.15px;width:8.2px;height:8.2px;border-radius:50%;background:#94a3b8"></div>
<div style="position:absolute;left:2327.70px;top:1257.15px;width:8.2px;height:8.2px;border-radius:50%;background:#94a3b8"></div>
<svg style="position:absolute;left:2352.8px;top:1234.85px" width="30" height="30" viewBox="0 0 30 30"><rect x="0" y="0" width="30" height="30" rx="3" fill="#4f46e5"/><path d="M5.2 15.8 L11.3 21.6 L24.6 8.2" fill="none" stroke="#f3eadf" stroke-width="2.6"/></svg>
<div style="position:absolute;left:2315.00px;top:1292.25px;width:33.60px;height:3.30px;background:#94a3b8"></div>
<div style="position:absolute;left:2315.00px;top:1301.25px;width:33.60px;height:3.30px;background:#94a3b8"></div>
<div style="position:absolute;left:2315.00px;top:1310.25px;width:22.00px;height:3.30px;background:#94a3b8"></div>
<div style="position:absolute;left:112.00px;top:1452.00px;width:2314.00px;height:1.00px;background:#334155"></div>
<svg style="position:absolute;left:174.00px;top:1347.80px" width="54" height="91" viewBox="0 0 54 91" preserveAspectRatio="none">
<defs><linearGradient id="ph4b" x1="0" y1="0" x2="0" y2="1"><stop offset="0" stop-color="#858b94"/><stop offset="0.33" stop-color="#969ca4"/><stop offset="0.42" stop-color="#80995a"/><stop offset="1" stop-color="#80995a"/></linearGradient>
<radialGradient id="ph4f" cx="0.42" cy="0.4" r="0.65"><stop offset="0" stop-color="#dea98a"/><stop offset="1" stop-color="#b88264"/></radialGradient>
<linearGradient id="ph4s" x1="0" y1="0" x2="1" y2="1"><stop offset="0" stop-color="#ecc83e"/><stop offset="1" stop-color="#d0a828"/></linearGradient></defs>
<rect width="54" height="91" fill="url(#ph4b)"/>
<rect x="15.0" y="42" width="22" height="29.0" fill="#b88264"/>
<path d="M2 91 L4 67.0 Q8 59.0 16.0 57.0 L26.0 69.0 L37.0 55.0 Q50 57.0 54 62.0 L54 91 Z" fill="url(#ph4s)"/>
<path d="M16.0 57.0 L26.0 69.0 L37.0 55.0" fill="none" stroke="#1d1d1d" stroke-width="2.2"/>
<ellipse cx="27.0" cy="17" rx="17" ry="13.5" fill="#4b3526"/>
<ellipse cx="26.0" cy="31" rx="15.5" ry="21.5" fill="url(#ph4f)"/>
<ellipse cx="41.0" cy="31" rx="3" ry="5" fill="#b88264"/>
<path d="M12.0 38 Q16.0 54 26.0 54 Q36.0 54 40.0 38 Q35.0 48 26.0 48 Q17.0 48 12.0 38 Z" fill="#8a6450" opacity="0.55"/>
<path d="M15.0 24.5 h7 M29.0 24.5 h7" stroke="#4a3020" stroke-width="1.6" opacity="0.8"/>
<path d="M16.5 28 h4 M30.5 28 h4" stroke="#3a2a22" stroke-width="1.5" opacity="0.7"/>
<path d="M21.0 40.5 q5 1.5 10 0" stroke="#8a4a40" stroke-width="1.6" fill="none" opacity="0.7"/>
<path d="M26.0 29 l-1.5 7 h3" stroke="#b88264" stroke-width="1.2" fill="none" opacity="0.6"/>
</svg>
<div class="t" style="left:288.21px;top:1358.28px;font-size:27.03px;color:#f8fafc;transform:scaleX(1.0200);transform-origin:2.49px 0;">Ian Mo</div>
<div class="t" style="left:289.64px;top:1405.18px;font-size:27.03px;color:#f8fafc;transform:scaleX(0.9947);transform-origin:1.06px 0;">03/12/1990 M</div>
<div class="t" style="left:616.37px;top:1358.28px;font-size:27.03px;color:#f8fafc;transform:scaleX(0.9839);transform-origin:1.03px 0;">376</div>
<div class="t" style="left:615.34px;top:1405.18px;font-size:27.03px;color:#f8fafc;transform:scaleX(0.9207);transform-origin:2.06px 0;">1T6</div>
<div class="t" style="left:823.81px;top:1358.28px;font-size:27.03px;color:#f8fafc;transform:scaleX(0.9411);transform-origin:2.49px 0;">IRL</div>
<div class="t" style="left:1186.13px;top:1358.28px;font-size:27.03px;color:#f8fafc;transform:scaleX(1.0037);transform-origin:1.37px 0;">Club Registration</div>
<div class="t" style="left:1185.68px;top:1405.18px;font-size:27.03px;color:#f8fafc;transform:scaleX(1.0504);transform-origin:2.22px 0;">Football</div>
<div class="t" style="left:1511.15px;top:1358.28px;font-size:27.03px;color:#f8fafc;transform:scaleX(1.0111);transform-origin:0.05px 0;">Amateur</div>
<div class="t" style="left:1776.84px;top:1377.28px;font-size:27.03px;color:#f8fafc;transform:scaleX(0.9602);transform-origin:1.36px 0;">21/11/2025</div>
<div style="position:absolute;left:2021.00px;top:1346.80px;width:176.00px;height:47.00px;background:#008080;border-radius:24px"></div>
<div class="t" style="left:2043.41px;top:1359.70px;font-size:21.80px;color:#fff;font-weight:700;transform:scaleX(1.0030);transform-origin:0.89px 0;">CONFIRMED</div>
<div class="t" style="left:2017.64px;top:1412.88px;font-size:27.03px;color:#f8fafc;transform:scaleX(0.9602);transform-origin:1.36px 0;">21/11/2025</div>
<div style="position:absolute;left:2327.70px;top:1373.90px;width:8.2px;height:8.2px;border-radius:50%;background:#94a3b8"></div>
<div style="position:absolute;left:2327.70px;top:1384.90px;width:8.2px;height:8.2px;border-radius:50%;background:#94a3b8"></div>
<div style="position:absolute;left:2327.70px;top:1395.90px;width:8.2px;height:8.2px;border-radius:50%;background:#94a3b8"></div>
<svg style="position:absolute;left:2347.85px;top:1369.15px" width="39.6" height="39.6" viewBox="0 0 24 24"><path d="M19 5v14H5V5h14m0-2H5c-1.1 0-2 .9-2 2v14c0 1.1.9 2 2 2h14c1.1 0 2-.9 2-2V5c0-1.1-.9-2-2-2z" fill="#94a3b8"/></svg>
<div style="position:absolute;left:112.00px;top:1569.00px;width:2314.00px;height:1.00px;background:#334155"></div>
<svg style="position:absolute;left:174.00px;top:1464.75px" width="54" height="91" viewBox="0 0 54 91" preserveAspectRatio="none">
<defs><linearGradient id="ph5b" x1="0" y1="0" x2="0" y2="1"><stop offset="0" stop-color="#40444e"/><stop offset="0.33" stop-color="#5c6068"/><stop offset="0.42" stop-color="#66844c"/><stop offset="1" stop-color="#66844c"/></linearGradient>
<radialGradient id="ph5f" cx="0.42" cy="0.4" r="0.65"><stop offset="0" stop-color="#d8a282"/><stop offset="1" stop-color="#a8765a"/></radialGradient>
<linearGradient id="ph5s" x1="0" y1="0" x2="1" y2="1"><stop offset="0" stop-color="#202020"/><stop offset="1" stop-color="#141414"/></linearGradient></defs>
<rect width="54" height="91" fill="url(#ph5b)"/>
<rect x="16.0" y="42" width="22" height="32.0" fill="#a8765a"/>
<path d="M2 91 L4 70.0 Q8 62.0 17.0 60.0 L27.0 72.0 L38.0 58.0 Q50 60.0 54 65.0 L54 91 Z" fill="url(#ph5s)"/>
<path d="M17.0 60.0 L27.0 72.0 L38.0 58.0" fill="none" stroke="#c6a44e" stroke-width="2.2"/>
<ellipse cx="28.0" cy="17" rx="17" ry="13.5" fill="#221a16"/>
<ellipse cx="27.0" cy="31" rx="15.5" ry="21.5" fill="url(#ph5f)"/>
<ellipse cx="42.0" cy="31" rx="3" ry="5" fill="#a8765a"/>
<path d="M13.0 38 Q17.0 54 27.0 54 Q37.0 54 41.0 38 Q36.0 48 27.0 48 Q18.0 48 13.0 38 Z" fill="#6a4a3a" opacity="0.55"/>
<path d="M16.0 24.5 h7 M30.0 24.5 h7" stroke="#4a3020" stroke-width="1.6" opacity="0.8"/>
<path d="M17.5 28 h4 M31.5 28 h4" stroke="#3a2a22" stroke-width="1.5" opacity="0.7"/>
<path d="M22.0 40.5 q5 1.5 10 0" stroke="#8a4a40" stroke-width="1.6" fill="none" opacity="0.7"/>
<path d="M27.0 29 l-1.5 7 h3" stroke="#a8765a" stroke-width="1.2" fill="none" opacity="0.6"/>
</svg>
<div class="t" style="left:289.42px;top:1475.23px;font-size:27.03px;color:#f8fafc;transform:scaleX(1.0031);transform-origin:1.28px 0;">Oliver Fitz</div>
<div class="t" style="left:288.64px;top:1522.13px;font-size:27.03px;color:#f8fafc;transform:scaleX(0.9723);transform-origin:2.06px 0;">17/12/2018 M</div>
<div class="t" style="left:616.01px;top:1475.23px;font-size:27.03px;color:#f8fafc;transform:scaleX(1.0275);transform-origin:1.39px 0;">703</div>
<div class="t" style="left:823.81px;top:1475.23px;font-size:27.03px;color:#f8fafc;transform:scaleX(0.9411);transform-origin:2.49px 0;">IRL</div>
<div class="t" style="left:1186.13px;top:1475.23px;font-size:27.03px;color:#f8fafc;transform:scaleX(1.0037);transform-origin:1.37px 0;">Club Registration</div>
<div class="t" style="left:1185.68px;top:1522.13px;font-size:27.03px;color:#f8fafc;transform:scaleX(1.0504);transform-origin:2.22px 0;">Football</div>
<div class="t" style="left:1511.15px;top:1475.23px;font-size:27.03px;color:#f8fafc;transform:scaleX(1.0111);transform-origin:0.05px 0;">Amateur</div>
<div class="t" style="left:1777.17px;top:1494.23px;font-size:27.03px;color:#f8fafc;transform:scaleX(0.9905);transform-origin:1.03px 0;">31/10/2025</div>
<div style="position:absolute;left:2021.00px;top:1463.75px;width:145.00px;height:47.00px;background:#1e90ff;border-radius:24px"></div>
<div class="t" style="left:2042.84px;top:1476.65px;font-size:21.80px;color:#fff;font-weight:700;transform:scaleX(0.9783);transform-origin:1.46px 0;">ENTERED</div>
<div class="t" style="left:2017.97px;top:1529.83px;font-size:27.03px;color:#f8fafc;transform:scaleX(0.9905);transform-origin:1.03px 0;">31/10/2025</div>
<div style="position:absolute;left:2327.70px;top:1490.85px;width:8.2px;height:8.2px;border-radius:50%;background:#94a3b8"></div>
<div style="position:absolute;left:2327.70px;top:1501.85px;width:8.2px;height:8.2px;border-radius:50%;background:#94a3b8"></div>
<div style="position:absolute;left:2327.70px;top:1512.85px;width:8.2px;height:8.2px;border-radius:50%;background:#94a3b8"></div>
<svg style="position:absolute;left:2347.85px;top:1486.10px" width="39.6" height="39.6" viewBox="0 0 24 24"><path d="M19 5v14H5V5h14m0-2H5c-1.1 0-2 .9-2 2v14c0 1.1.9 2 2 2h14c1.1 0 2-.9 2-2V5c0-1.1-.9-2-2-2z" fill="#94a3b8"/></svg>
<div style="position:absolute;left:112.00px;top:1686.00px;width:2314.00px;height:1.00px;background:#334155"></div>
<svg style="position:absolute;left:174.00px;top:1581.70px" width="54" height="91" viewBox="0 0 54 91" preserveAspectRatio="none">
<defs><linearGradient id="ph6b" x1="0" y1="0" x2="0" y2="1"><stop offset="0" stop-color="#9ea6ac"/><stop offset="0.33" stop-color="#aeb4b8"/><stop offset="0.42" stop-color="#82a85e"/><stop offset="1" stop-color="#82a85e"/></linearGradient>
<radialGradient id="ph6f" cx="0.42" cy="0.4" r="0.65"><stop offset="0" stop-color="#e6b496"/><stop offset="1" stop-color="#c28c6e"/></radialGradient>
<linearGradient id="ph6s" x1="0" y1="0" x2="1" y2="1"><stop offset="0" stop-color="#f2f2f6"/><stop offset="1" stop-color="#dadae2"/></linearGradient></defs>
<rect width="54" height="91" fill="url(#ph6b)"/>
<rect x="16.0" y="42" width="22" height="34.0" fill="#c28c6e"/>
<path d="M2 91 L4 72.0 Q8 64.0 17.0 62.0 L27.0 74.0 L38.0 60.0 Q50 62.0 54 67.0 L54 91 Z" fill="url(#ph6s)"/>
<path d="M17.0 62.0 L27.0 74.0 L38.0 60.0" fill="none" stroke="#1e2a5c" stroke-width="2.2"/>
<ellipse cx="28.0" cy="17" rx="17" ry="13.5" fill="#a8784a"/>
<ellipse cx="27.0" cy="31" rx="15.5" ry="21.5" fill="url(#ph6f)"/>
<ellipse cx="42.0" cy="31" rx="3" ry="5" fill="#c28c6e"/>

<path d="M16.0 24.5 h7 M30.0 24.5 h7" stroke="#4a3020" stroke-width="1.6" opacity="0.8"/>
<path d="M17.5 28 h4 M31.5 28 h4" stroke="#3a2a22" stroke-width="1.5" opacity="0.7"/>
<path d="M22.0 40.5 q5 1.5 10 0" stroke="#8a4a40" stroke-width="1.6" fill="none" opacity="0.7"/>
<path d="M27.0 29 l-1.5 7 h3" stroke="#c28c6e" stroke-width="1.2" fill="none" opacity="0.6"/>
</svg>
<div class="t" style="left:289.33px;top:1592.18px;font-size:27.03px;color:#f8fafc;transform:scaleX(0.9982);transform-origin:1.37px 0;">Carl Mc Kee</div>
<div class="t" style="left:288.64px;top:1639.08px;font-size:27.03px;color:#f8fafc;transform:scaleX(1.0009);transform-origin:2.06px 0;">11/07/2000 M</div>
<div class="t" style="left:616.78px;top:1592.18px;font-size:27.03px;color:#f8fafc;transform:scaleX(1.0392);transform-origin:0.62px 0;">439</div>
<div class="t" style="left:615.34px;top:1639.08px;font-size:27.03px;color:#f8fafc;transform:scaleX(0.9484);transform-origin:2.06px 0;">1M3</div>
<div class="t" style="left:823.81px;top:1592.18px;font-size:27.03px;color:#f8fafc;transform:scaleX(0.9411);transform-origin:2.49px 0;">IRL</div>
<div class="t" style="left:1186.13px;top:1592.18px;font-size:27.03px;color:#f8fafc;transform:scaleX(1.0037);transform-origin:1.37px 0;">Club Registration</div>
<div class="t" style="left:1185.68px;top:1639.08px;font-size:27.03px;color:#f8fafc;transform:scaleX(1.0504);transform-origin:2.22px 0;">Football</div>
<div class="t" style="left:1511.15px;top:1592.18px;font-size:27.03px;color:#f8fafc;transform:scaleX(1.0111);transform-origin:0.05px 0;">Amateur</div>
<div class="t" style="left:1776.84px;top:1611.18px;font-size:27.03px;color:#f8fafc;transform:scaleX(1.0258);transform-origin:1.36px 0;">23/10/2025</div>
<div style="position:absolute;left:2021.00px;top:1580.70px;width:176.00px;height:47.00px;background:#008080;border-radius:24px"></div>
<div class="t" style="left:2043.41px;top:1593.60px;font-size:21.80px;color:#fff;font-weight:700;transform:scaleX(1.0030);transform-origin:0.89px 0;">CONFIRMED</div>
<div class="t" style="left:2017.64px;top:1646.78px;font-size:27.03px;color:#f8fafc;transform:scaleX(1.0258);transform-origin:1.36px 0;">23/10/2025</div>
<div style="position:absolute;left:2327.70px;top:1607.80px;width:8.2px;height:8.2px;border-radius:50%;background:#94a3b8"></div>
<div style="position:absolute;left:2327.70px;top:1618.80px;width:8.2px;height:8.2px;border-radius:50%;background:#94a3b8"></div>
<div style="position:absolute;left:2327.70px;top:1629.80px;width:8.2px;height:8.2px;border-radius:50%;background:#94a3b8"></div>
<svg style="position:absolute;left:2352.8px;top:1608.00px" width="30" height="30" viewBox="0 0 30 30"><rect x="0" y="0" width="30" height="30" rx="3" fill="#4f46e5"/><path d="M5.2 15.8 L11.3 21.6 L24.6 8.2" fill="none" stroke="#f3eadf" stroke-width="2.6"/></svg>
</body></html>
